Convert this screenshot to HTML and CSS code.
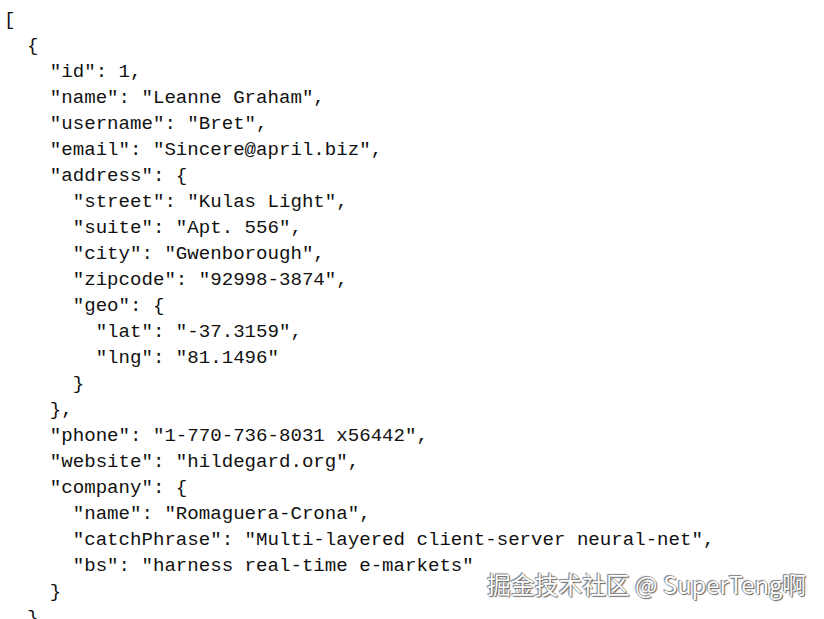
FILE: index.html
```html
<!DOCTYPE html>
<html lang="zh">
<head>
<meta charset="utf-8">
<link rel="stylesheet" href="styles.css">
</head>
<body>
<pre class="json">[
  {
    "id": 1,
    "name": "Leanne Graham",
    "username": "Bret",
    "email": "Sincere@april.biz",
    "address": {
      "street": "Kulas Light",
      "suite": "Apt. 556",
      "city": "Gwenborough",
      "zipcode": "92998-3874",
      "geo": {
        "lat": "-37.3159",
        "lng": "81.1496"
      }
    },
    "phone": "1-770-736-8031 x56442",
    "website": "hildegard.org",
    "company": {
      "name": "Romaguera-Crona",
      "catchPhrase": "Multi-layered client-server neural-net",
      "bs": "harness real-time e-markets"
    }
  }
]</pre>
<div class="watermark">掘金技术社区 @ SuperTeng啊</div>
</body>
</html>
```
FILE: styles.css
```css
html, body {
  margin: 0;
  padding: 0;
  background: #ffffff;
  overflow: hidden;
}
body {
  width: 824px;
  height: 619px;
  position: relative;
}
.json {
  margin: 0;
  padding: 7px 0 0 4px;
  font-family: "Liberation Mono", "DejaVu Sans Mono", monospace;
  font-size: 19.1px;
  line-height: 26px;
  color: #111111;
}
.watermark {
  position: absolute;
  left: 487px;
  top: 568px;
  font-family: "Noto Sans CJK SC", "Noto Sans", sans-serif;
  font-size: 23.8px;
  line-height: 32px;
  color: #ffffff;
  text-shadow: 0 0 1px #555, 1px 1px 1px #666, -1px -1px 1px #888;
  white-space: nowrap;
}
```
